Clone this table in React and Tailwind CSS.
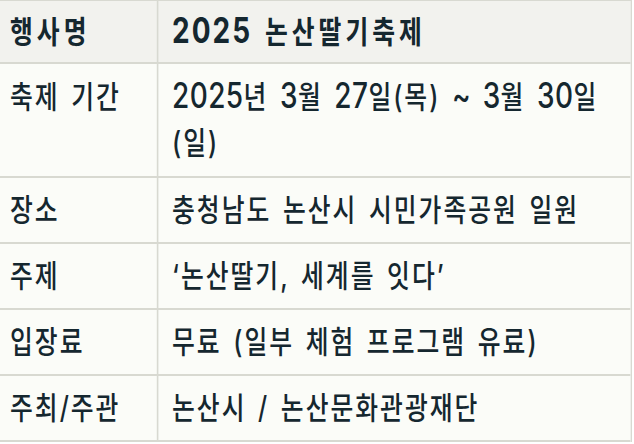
import React from "react";

const rows = [
  { k: "축제 기간", v: "2025년 3월 27일(목) ~ 3월 30일 (일)", tall: true },
  { k: "장소", v: "충청남도 논산시 시민가족공원 일원" },
  { k: "주제", v: "‘논산딸기, 세계를 잇다’" },
  { k: "입장료", v: "무료 (일부 체험 프로그램 유료)" },
  { k: "주최/주관", v: "논산시 / 논산문화관광재단" },
];

function Txt({ s, bold }) {
  const parts = s.split(/([0-9~]+)/);
  return (
    <>
      {parts.map((p, i) =>
        /^[0-9~]+$/.test(p) ? (
          <span
            key={i}
            className={
              bold
                ? "text-[35px] leading-[30px] tracking-[2.5px]"
                : "text-[35px] leading-[30px] tracking-[0.5px]"
            }
          >
            {p}
          </span>
        ) : (
          <React.Fragment key={i}>{p}</React.Fragment>
        )
      )}
    </>
  );
}

export default function App() {
  return (
    <div className="w-[634px] h-[444px] overflow-hidden bg-white">
      <div
        className="w-[792.5px] origin-top-left scale-x-[0.8] text-[31px] font-medium text-[#15272f] tracking-[2.5px] [word-spacing:3.75px]"
        style={{ fontFamily: '"Inter", "Noto Sans CJK KR", sans-serif' }}
      >
        <div className="w-[790px] border-t border-r-[2.5px] border-[#d8d9d1]">
          <div className="flex border-b-2 border-[#d8d9d1] bg-[#f2f2ee] font-bold tracking-[5px]">
            <div className="w-[197.5px] shrink-0 border-r-[2.5px] border-[#d8d9d1] pl-[12.5px] py-[7.5px] leading-[46px]">
              행사명
            </div>
            <div className="flex-1 pl-[17.5px] pr-[17px] py-[7.5px] leading-[46px]">
              <Txt s="2025 논산딸기축제" bold />
            </div>
          </div>
          {rows.map((r, i) => (
            <div
              key={i}
              className="flex border-b-2 border-[#d8d9d1] bg-[#fbfcf8]"
            >
              <div
                className={
                  r.tall
                    ? "w-[197.5px] shrink-0 border-r-[2.5px] border-[#d8d9d1] pl-[12.5px] pt-[10px] pb-[10px] leading-[46px]"
                    : "w-[197.5px] shrink-0 border-r-[2.5px] border-[#d8d9d1] pl-[12.5px] py-[9px] leading-[46px]"
                }
              >
                {r.k}
              </div>
              <div
                className={
                  r.tall
                    ? "flex-1 pl-[17.5px] pr-[17px] pt-[10px] pb-[10px] leading-[46px]"
                    : "flex-1 pl-[17.5px] pr-[17px] py-[9px] leading-[46px]"
                }
              >
                <Txt s={r.v} />
              </div>
            </div>
          ))}
        </div>
      </div>
    </div>
  );
}
